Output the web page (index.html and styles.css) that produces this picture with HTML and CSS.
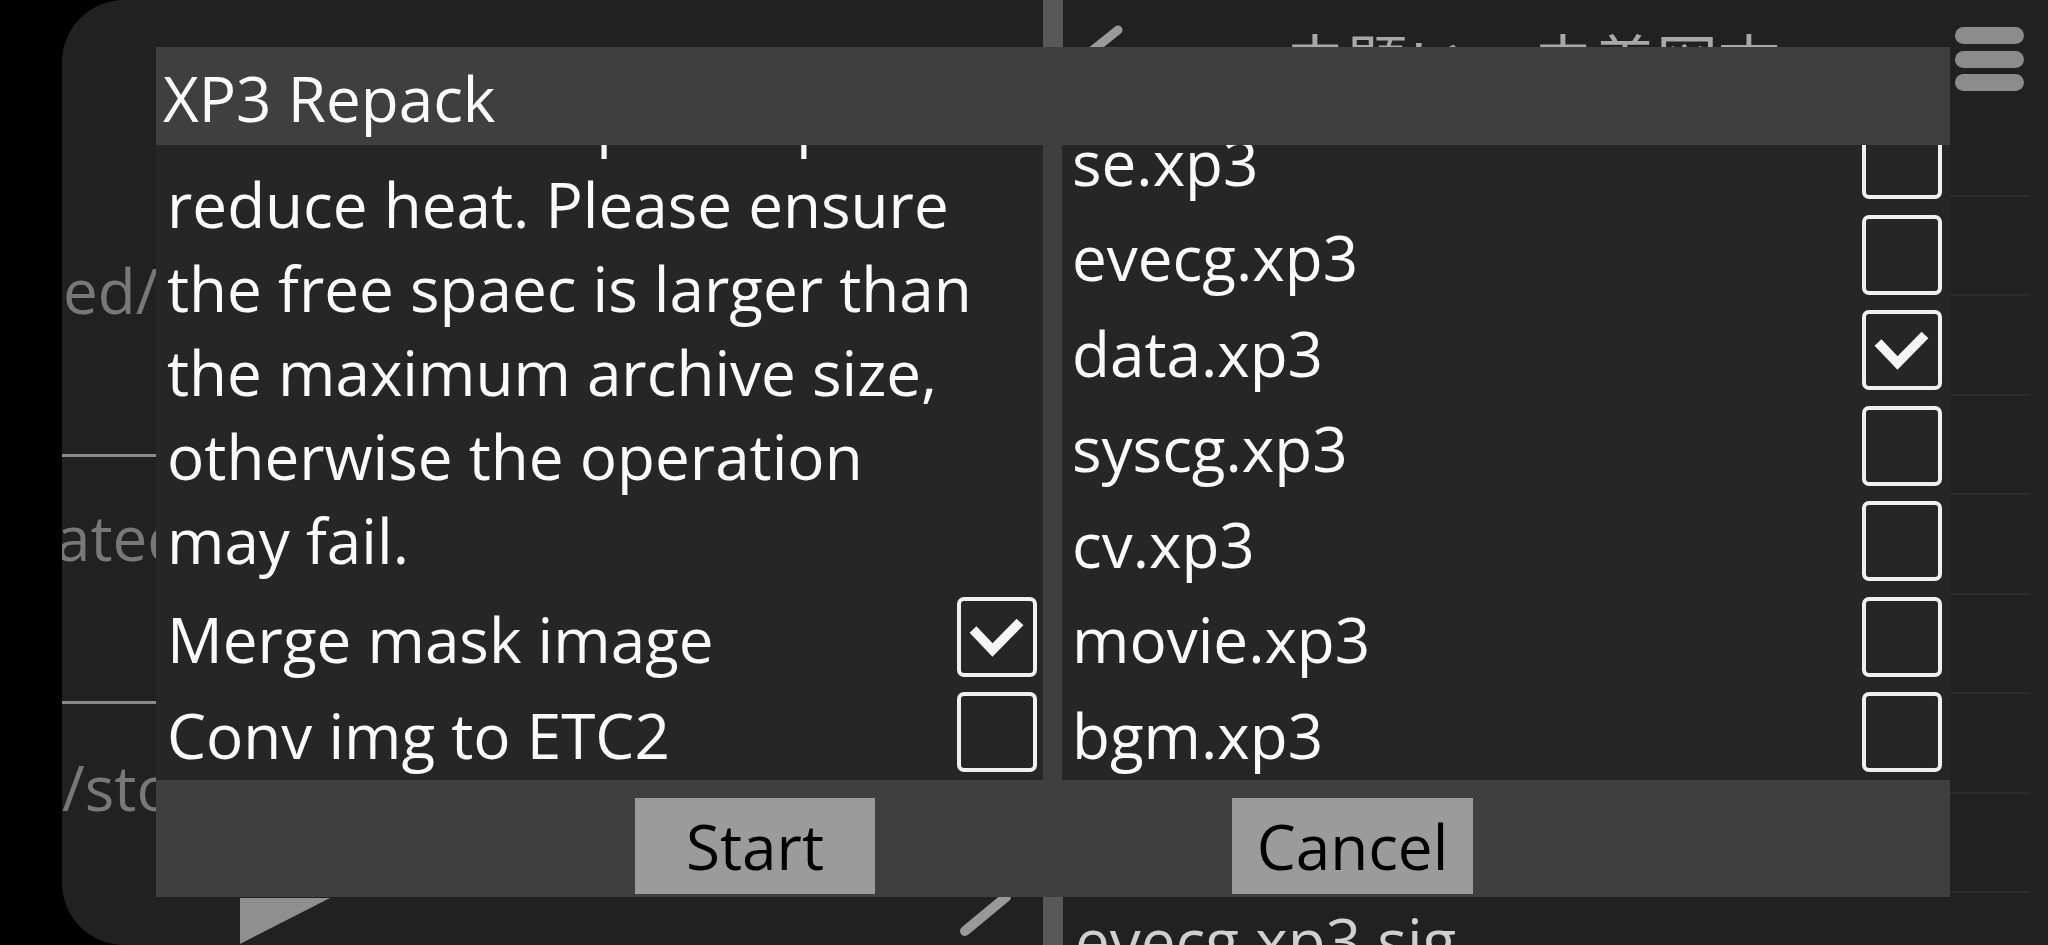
FILE: index.html
```html
<!DOCTYPE html>
<html lang="en">
<head>
<meta charset="utf-8">
<title>XP3 Repack</title>
<link rel="stylesheet" href="styles.css">
</head>
<body>
<div class="screen">
  <div class="app">
    <section class="pane-left">
      <div class="pl-header"></div>
      <div class="pl-item"><span class="path path-1">ed/Android/data/game/files</span></div>
      <div class="pl-item"><span class="path path-2">ated/0/Download/game</span></div>
      <div class="pl-item pl-item-last"><span class="path">/storage/emulated/0</span></div>
      <div class="pl-bottom">
        <svg class="pl-icons" width="981" height="48" viewBox="0 0 981 48">
          <polygon points="178,0 268,0 178,46" fill="#8f8f8f"/>
          <line x1="903" y1="33" x2="944" y2="-1" stroke="#999" stroke-width="10" stroke-linecap="round"/>
        </svg>
      </div>
    </section>
    <div class="divider"></div>
    <section class="pane-right">
      <header class="pr-header">
        <svg class="back" width="50" height="120" viewBox="0 0 50 120">
          <polyline points="43,30 3,62 43,94" fill="none" stroke="#9a9a9a" stroke-width="9" stroke-linecap="round" stroke-linejoin="round"/>
        </svg>
        <span class="pr-title">未題い　未着図文</span>
        <div class="menu"><i></i><i></i><i></i></div>
      </header>
      <ul class="files">
        <li>scenario.xp3</li>
        <li>image.xp3</li>
        <li>fgimage.xp3</li>
        <li>bgimage.xp3</li>
        <li>voice.xp3</li>
        <li>system.xp3</li>
        <li>video.xp3</li>
        <li>evecg.xp3.sig</li>
      </ul>
    </section>
  </div>

  <div class="dialog">
    <div class="dlg-title">XP3 Repack</div>
    <div class="dlg-body">
      <div class="panel panel-left">
        <p class="note">Repacking small files into one large<br>archive could speed up and<br>reduce heat. Please ensure<br>the free spaec is larger than<br>the maximum archive size,<br>otherwise the operation<br>may fail.</p>
        <div class="opt">
          <span class="opt-label">Merge mask image</span>
          <span class="check is-on"><svg width="72" height="72" viewBox="0 0 72 72"><polyline points="12,28.5 31.5,49 59,21" fill="none" stroke="#f5f5f5" stroke-width="9.5"/></svg></span>
        </div>
        <div class="opt">
          <span class="opt-label">Conv img to ETC2</span>
          <span class="check"></span>
        </div>
      </div>
      <div class="panel panel-right">
        <div class="opt"><span class="opt-label">image.xp3</span><span class="check"></span></div>
        <div class="opt"><span class="opt-label">se.xp3</span><span class="check"></span></div>
        <div class="opt"><span class="opt-label">evecg.xp3</span><span class="check"></span></div>
        <div class="opt"><span class="opt-label">data.xp3</span><span class="check is-on"><svg width="72" height="72" viewBox="0 0 72 72"><polyline points="12,28.5 31.5,49 59,21" fill="none" stroke="#f5f5f5" stroke-width="9.5"/></svg></span></div>
        <div class="opt"><span class="opt-label">syscg.xp3</span><span class="check"></span></div>
        <div class="opt"><span class="opt-label">cv.xp3</span><span class="check"></span></div>
        <div class="opt"><span class="opt-label">movie.xp3</span><span class="check"></span></div>
        <div class="opt"><span class="opt-label">bgm.xp3</span><span class="check"></span></div>
      </div>
    </div>
    <div class="dlg-actions">
      <button class="btn btn-start" type="button">Start</button>
      <button class="btn btn-cancel" type="button">Cancel</button>
    </div>
  </div>
</div>
</body>
</html>
```
FILE: styles.css
```css
html, body {
  margin: 0;
  padding: 0;
  background: #000;
  overflow: hidden;
}

body {
  font-family: "Open Sans", "Noto Sans", "Noto Sans CJK JP", sans-serif;
  color: #fafafa;
}

.screen {
  position: relative;
  width: 2048px;
  height: 945px;
  box-sizing: border-box;
  padding-left: 62px;
  display: flex;
  background: #000;
}

.app {
  flex: 1;
  display: flex;
  background: #212121;
  border-radius: 62px 0 0 62px;
  overflow: hidden;
}

/* ---------- background: left pane ---------- */
.pane-left {
  width: 981px;
  flex-shrink: 0;
  display: flex;
  flex-direction: column;
  overflow: hidden;
}

.pl-header {
  height: 210px;
  flex-shrink: 0;
}

.pl-item {
  height: 247px;
  flex-shrink: 0;
  box-sizing: border-box;
  border-bottom: 3px solid #8a8a8a;
  padding-top: 49px;
  overflow: hidden;
}

.pl-item-last {
  height: 194px;
  border-bottom: 0;
  padding-top: 52px;
}

.path {
  display: block;
  font-size: 62px;
  line-height: 62px;
  color: #787878;
  white-space: nowrap;
}

.path-1 { padding-left: 1px; }
.path-2 { text-indent: -6px; }

.pl-bottom {
  height: 48px;
  flex-shrink: 0;
}

.pl-icons { display: block; overflow: visible; }

.divider {
  width: 20px;
  flex-shrink: 0;
  background: #585858;
}

/* ---------- background: right pane ---------- */
.pane-right {
  flex: 1;
  display: flex;
  flex-direction: column;
  overflow: hidden;
}

.pr-header {
  height: 195px;
  flex-shrink: 0;
  display: flex;
  align-items: flex-start;
}

.back {
  display: block;
  margin-left: 12px;
  flex-shrink: 0;
}

.pr-title {
  margin-left: 159px;
  margin-top: 29px;
  font-family: "Noto Sans CJK JP", "Noto Sans CJK SC", sans-serif;
  font-size: 62px;
  line-height: 62px;
  color: #a8a8a8;
  white-space: nowrap;
}

.menu {
  margin-left: auto;
  margin-right: 24px;
  margin-top: 27px;
  display: flex;
  flex-direction: column;
  gap: 6.5px;
}

.menu i {
  display: block;
  width: 69px;
  height: 17px;
  border-radius: 8.5px;
  background: #8c8c8c;
}

.files {
  list-style: none;
  margin: 0 18px 0 0;
  padding: 0;
}

.files li {
  height: 99.43px;
  box-sizing: border-box;
  border-top: 2px solid #2c2c2c;
  padding: 5px 0 0 12px;
  font-size: 62px;
  line-height: 84px;
  color: #d0d0d0;
  white-space: nowrap;
}

/* ---------- dialog ---------- */
.dialog {
  position: absolute;
  left: 156px;
  top: 47px;
  width: 1794px;
  height: 850px;
  display: flex;
  flex-direction: column;
  background: #3f3f3f;
}

.dlg-title {
  height: 98px;
  flex-shrink: 0;
  box-sizing: border-box;
  padding: 4px 0 0 7px;
  display: flex;
  align-items: center;
  font-size: 62px;
  line-height: 84px;
  color: #fafafa;
}

.dlg-body {
  flex: 1;
  min-height: 0;
  display: flex;
  gap: 19px;
}

.panel {
  background: #262626;
  overflow: hidden;
  display: flex;
  flex-direction: column;
  justify-content: flex-end;
  box-sizing: border-box;
}

.panel-left {
  width: 887px;
  flex-shrink: 0;
  padding: 0 6px 0 11px;
}

.panel-right {
  flex: 1;
  padding: 0 8px 0 10px;
}

.note {
  flex-shrink: 0;
  margin: 0 0 7px;
  font-size: 62px;
  line-height: 84px;
  white-space: nowrap;
  color: #fafafa;
}

.opt {
  height: 95.5px;
  flex-shrink: 0;
  display: flex;
  align-items: center;
  justify-content: space-between;
}

.opt-label {
  padding-top: 5px;
  font-size: 62px;
  line-height: 84px;
  color: #fafafa;
  white-space: nowrap;
}

.check {
  width: 80px;
  height: 80px;
  flex-shrink: 0;
  box-sizing: border-box;
  border: 4px solid #f0f0f0;
  border-radius: 7px;
}

.check svg { display: block; }

.dlg-actions {
  height: 117px;
  flex-shrink: 0;
  box-sizing: border-box;
  padding: 18px 0 0 479px;
  display: flex;
  align-items: flex-start;
  gap: 357px;
}

.btn {
  height: 96px;
  border: 0;
  padding: 0;
  margin: 0;
  background: #9b9b9b;
  color: #000;
  font-family: "Open Sans", "Noto Sans", sans-serif;
  font-size: 62px;
  line-height: 84px;
  display: flex;
  align-items: center;
  justify-content: center;
}

.btn-start { width: 240px; }
.btn-cancel { width: 241px; }
```
